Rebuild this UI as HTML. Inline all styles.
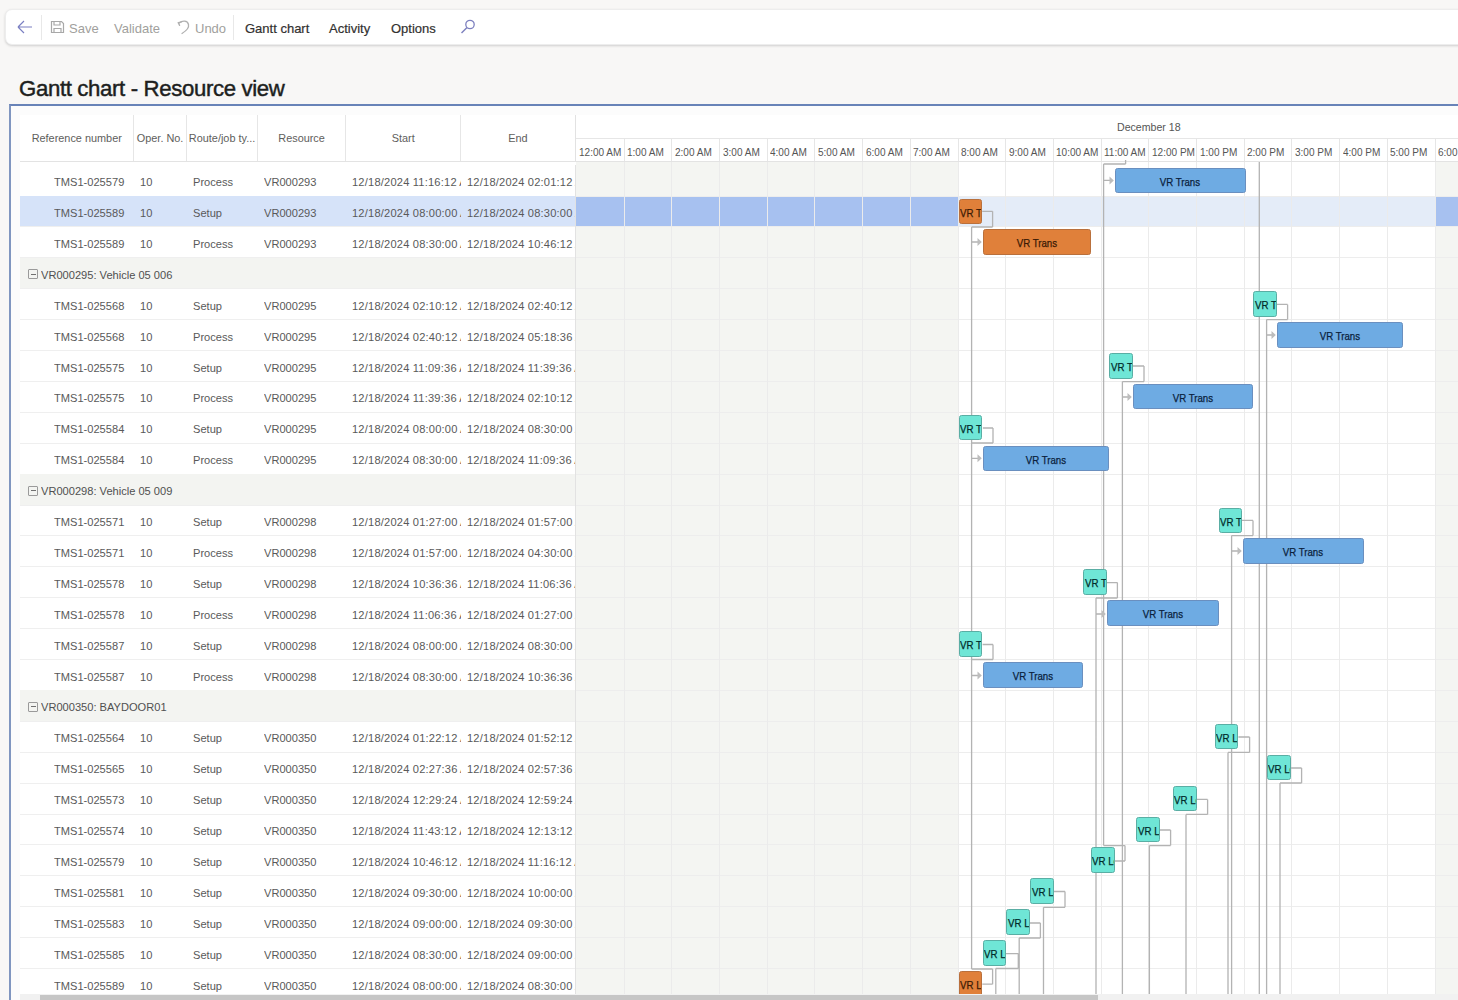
<!DOCTYPE html>
<html><head><meta charset="utf-8"><title>Gantt chart - Resource view</title>
<style>
*{box-sizing:border-box}
html,body{margin:0;padding:0;width:1458px;height:1000px;overflow:hidden;background:#f8f7f6;font-family:"Liberation Sans",sans-serif;}
.abs{position:absolute}
#tb{position:absolute;left:4.8px;top:9px;width:1470px;height:36px;background:#fff;border-radius:7px;border:1px solid #ededed;box-shadow:0 1px 2.5px rgba(0,0,0,.16);}
.ti{position:absolute;top:20.5px;font-size:13px;line-height:16px;white-space:nowrap;color:#323130}
.dis{color:#a19f9d}
.act{-webkit-text-stroke:0.2px #323130}
#title{position:absolute;left:19px;top:75.5px;font-size:22.2px;line-height:26px;color:#201f1e;white-space:nowrap;letter-spacing:-0.35px;-webkit-text-stroke:0.45px #201f1e}
#panel{position:absolute;left:8.8px;top:104px;width:1460px;height:900px;background:#fcfcfc;border-top:2px solid #6883b8;border-left:2px solid #8096c0;}
.hc{position:absolute;top:115px;height:47px;background:#fff;font-size:10.9px;color:#605e5c;line-height:47px;text-align:center;white-space:nowrap;overflow:hidden}
.cell{position:absolute;font-size:11.1px;color:#595959;white-space:nowrap;overflow:hidden;line-height:30px;padding-top:2px}
.bar{position:absolute;height:25.5px;border-radius:2.5px;overflow:hidden;white-space:nowrap;font-size:11px;line-height:22px;padding-top:2px;text-align:center}
.bar span{display:inline-block;transform:scaleX(0.88);transform-origin:0 50%;-webkit-text-stroke:0.25px currentColor}
.bar.c span{transform-origin:50% 50%}
.bp{background:#6eabe3;border:1.3px solid #6a8fbf;color:#0b1f3d}
.bs{background:#6fe6d6;border:1.3px solid #5aaea4;color:#002b2a}
.bo{background:#e0803a;border:1.3px solid #b9703c;color:#3a1a05}
.hl{position:absolute;font-size:10.8px;color:#555;white-space:nowrap;top:145px;line-height:14px;transform:scaleX(0.93);transform-origin:0 50%}
</style></head><body>

<div id="wrap" style="position:absolute;left:0;top:0;width:1458px;height:1000px;background:#f8f7f6">
<div id="tb"></div>
<svg class="abs" style="left:16px;top:19px" width="18" height="16" viewBox="0 0 18 16"><path d="M2 8H16M2 8L8 2M2 8L8 14" stroke="#7a7fc2" stroke-width="1.15" fill="none"/></svg>
<div class="abs" style="left:41px;top:15px;width:1px;height:25px;background:#e8e8e8"></div>
<svg class="abs" style="left:50px;top:20px" width="15" height="14" viewBox="0 0 15 14"><path d="M1.5 1.5H11.5L13.5 3.5V12.5H1.5Z M4 1.5V5H10V1.5 M4 12.5V8.5H11V12.5" stroke="#a8a8a8" stroke-width="1.2" fill="none"/></svg>
<div class="ti dis" style="left:69px">Save</div>
<div class="ti dis" style="left:114px">Validate</div>
<svg class="abs" style="left:177px;top:19px" width="14" height="16" viewBox="0 0 14 16"><path d="M1.8 4.2C5 1.5 10.5 1.2 11.5 5.5C12.2 8.5 9 12 5 14.5" stroke="#b0b0b0" stroke-width="1.3" fill="none" stroke-linecap="round"/><path d="M1.2 3.6L4.2 3.2M1.2 3.6L2.6 6.4" stroke="#b0b0b0" stroke-width="1.3" fill="none" stroke-linecap="round"/></svg>
<div class="ti dis" style="left:195px">Undo</div>
<div class="abs" style="left:233px;top:15px;width:1px;height:25px;background:#e8e8e8"></div>
<div class="ti act" style="left:245px">Gantt chart</div>
<div class="ti act" style="left:329px">Activity</div>
<div class="ti act" style="left:391px">Options</div>
<svg class="abs" style="left:460px;top:19px" width="16" height="15" viewBox="0 0 16 15"><circle cx="10" cy="5.5" r="4.2" stroke="#7d80bf" stroke-width="1.3" fill="none"/><path d="M7 8.5L1.5 14" stroke="#7d80bf" stroke-width="1.4"/></svg>
<div id="title">Gantt chart - Resource view</div>
<div id="panel"></div>
<div class="hc" style="left:20px;width:113.5px">Reference number</div>
<div class="hc" style="left:133.5px;width:53.19999999999999px">Oper. No.</div>
<div class="hc" style="left:186.7px;width:70.69999999999999px">Route/job ty...</div>
<div class="hc" style="left:257.4px;width:88.40000000000003px">Resource</div>
<div class="hc" style="left:345.8px;width:114.80000000000001px">Start</div>
<div class="hc" style="left:460.6px;width:114.69999999999993px">End</div>
<div class="abs" style="left:133.0px;top:115px;width:1px;height:47px;background:#e6e6e6"></div>
<div class="abs" style="left:186.2px;top:115px;width:1px;height:47px;background:#e6e6e6"></div>
<div class="abs" style="left:256.9px;top:115px;width:1px;height:47px;background:#e6e6e6"></div>
<div class="abs" style="left:345.3px;top:115px;width:1px;height:47px;background:#e6e6e6"></div>
<div class="abs" style="left:460.1px;top:115px;width:1px;height:47px;background:#e6e6e6"></div>
<div class="abs" style="left:20px;top:162px;width:556px;height:3px;background:#fff"></div>
<div class="abs" style="left:575.3px;top:115px;width:900px;height:47px;background:#fff"></div>
<div class="abs" style="left:575.3px;top:138px;width:900px;height:1px;background:#e6e6e6"></div>
<div class="abs" style="left:575px;top:115px;width:1px;height:885px;background:#e2e2e2"></div>
<div class="abs" style="left:1117px;top:119.5px;font-size:10.6px;line-height:14px;color:#555;white-space:nowrap">December 18</div>
<div class="hl" style="left:579.4px">12:00 AM</div>
<div class="hl" style="left:627.1px">1:00 AM</div>
<div class="abs" style="left:623.6px;top:138px;width:1px;height:24px;background:#e6e6e6"></div>
<div class="hl" style="left:674.8px">2:00 AM</div>
<div class="abs" style="left:671.3px;top:138px;width:1px;height:24px;background:#e6e6e6"></div>
<div class="hl" style="left:722.5px">3:00 AM</div>
<div class="abs" style="left:719.0px;top:138px;width:1px;height:24px;background:#e6e6e6"></div>
<div class="hl" style="left:770.2px">4:00 AM</div>
<div class="abs" style="left:766.7px;top:138px;width:1px;height:24px;background:#e6e6e6"></div>
<div class="hl" style="left:817.9px">5:00 AM</div>
<div class="abs" style="left:814.4px;top:138px;width:1px;height:24px;background:#e6e6e6"></div>
<div class="hl" style="left:865.6px">6:00 AM</div>
<div class="abs" style="left:862.1px;top:138px;width:1px;height:24px;background:#e6e6e6"></div>
<div class="hl" style="left:913.3px">7:00 AM</div>
<div class="abs" style="left:909.8px;top:138px;width:1px;height:24px;background:#e6e6e6"></div>
<div class="hl" style="left:961.0px">8:00 AM</div>
<div class="abs" style="left:957.5px;top:138px;width:1px;height:24px;background:#e6e6e6"></div>
<div class="hl" style="left:1008.7px">9:00 AM</div>
<div class="abs" style="left:1005.2px;top:138px;width:1px;height:24px;background:#e6e6e6"></div>
<div class="hl" style="left:1056.4px">10:00 AM</div>
<div class="abs" style="left:1052.9px;top:138px;width:1px;height:24px;background:#e6e6e6"></div>
<div class="hl" style="left:1104.1px">11:00 AM</div>
<div class="abs" style="left:1100.6px;top:138px;width:1px;height:24px;background:#e6e6e6"></div>
<div class="hl" style="left:1151.8000000000002px">12:00 PM</div>
<div class="abs" style="left:1148.3000000000002px;top:138px;width:1px;height:24px;background:#e6e6e6"></div>
<div class="hl" style="left:1199.5px">1:00 PM</div>
<div class="abs" style="left:1196.0px;top:138px;width:1px;height:24px;background:#e6e6e6"></div>
<div class="hl" style="left:1247.2px">2:00 PM</div>
<div class="abs" style="left:1243.7px;top:138px;width:1px;height:24px;background:#e6e6e6"></div>
<div class="hl" style="left:1294.9px">3:00 PM</div>
<div class="abs" style="left:1291.4px;top:138px;width:1px;height:24px;background:#e6e6e6"></div>
<div class="hl" style="left:1342.6px">4:00 PM</div>
<div class="abs" style="left:1339.1px;top:138px;width:1px;height:24px;background:#e6e6e6"></div>
<div class="hl" style="left:1390.3000000000002px">5:00 PM</div>
<div class="abs" style="left:1386.8000000000002px;top:138px;width:1px;height:24px;background:#e6e6e6"></div>
<div class="hl" style="left:1438.0px">6:00 PM</div>
<div class="abs" style="left:1434.5px;top:138px;width:1px;height:24px;background:#e6e6e6"></div>
<div class="abs" style="left:20px;top:161px;width:1440px;height:1.2px;background:#e3e3e3"></div>
<div class="abs" style="left:20px;top:162px;width:556px;height:3px;background:#fff"></div>
<div class="abs" style="left:575.5px;top:162px;width:382.5px;height:840px;background:#f4f5f2"></div>
<div class="abs" style="left:958.0px;top:162px;width:477.0px;height:840px;background:#fff"></div>
<div class="abs" style="left:1435.0px;top:162px;width:100px;height:840px;background:#f4f5f2"></div>
<div class="abs" style="left:20px;top:162px;width:555.3px;height:840px;background:#fff"></div>
<div class="cell" style="left:54px;top:165.1px;width:80px">TMS1-025579</div>
<div class="cell" style="left:140px;top:165.1px;width:40px">10</div>
<div class="cell" style="left:193px;top:165.1px;width:60px">Process</div>
<div class="cell" style="left:264px;top:165.1px;width:80px">VR000293</div>
<div class="cell" style="left:352px;top:165.1px;width:108.60000000000002px"><span style="letter-spacing:0.2px">12/18/2024 11:16:12</span> AM</div>
<div class="cell" style="left:467px;top:165.1px;width:108.29999999999995px"><span style="letter-spacing:0.2px">12/18/2024 02:01:12</span> AM</div>
<div class="abs" style="left:20px;top:195.5px;width:555px;height:1px;background:#efefef"></div>
<div class="abs" style="left:20px;top:196.0px;width:555.3px;height:30.9px;background:#d6e3f9"></div>
<div class="abs" style="left:575.5px;top:196.0px;width:382.5px;height:30.9px;background:#a7c1f0"></div>
<div class="abs" style="left:958.0px;top:196.0px;width:477.0px;height:30.9px;background:#e4ecf8"></div>
<div class="abs" style="left:1435.0px;top:196.0px;width:100px;height:30.9px;background:#a7c1f0"></div>
<div class="cell" style="left:54px;top:196.0px;width:80px">TMS1-025589</div>
<div class="cell" style="left:140px;top:196.0px;width:40px">10</div>
<div class="cell" style="left:193px;top:196.0px;width:60px">Setup</div>
<div class="cell" style="left:264px;top:196.0px;width:80px">VR000293</div>
<div class="cell" style="left:352px;top:196.0px;width:108.60000000000002px"><span style="letter-spacing:0.2px">12/18/2024 08:00:00</span> AM</div>
<div class="cell" style="left:467px;top:196.0px;width:108.29999999999995px"><span style="letter-spacing:0.2px">12/18/2024 08:30:00</span> AM</div>
<div class="abs" style="left:20px;top:226.4px;width:555px;height:1px;background:#efefef"></div>
<div class="cell" style="left:54px;top:226.89999999999998px;width:80px">TMS1-025589</div>
<div class="cell" style="left:140px;top:226.89999999999998px;width:40px">10</div>
<div class="cell" style="left:193px;top:226.89999999999998px;width:60px">Process</div>
<div class="cell" style="left:264px;top:226.89999999999998px;width:80px">VR000293</div>
<div class="cell" style="left:352px;top:226.89999999999998px;width:108.60000000000002px"><span style="letter-spacing:0.2px">12/18/2024 08:30:00</span> AM</div>
<div class="cell" style="left:467px;top:226.89999999999998px;width:108.29999999999995px"><span style="letter-spacing:0.2px">12/18/2024 10:46:12</span> AM</div>
<div class="abs" style="left:20px;top:257.29999999999995px;width:555px;height:1px;background:#efefef"></div>
<div class="abs" style="left:20px;top:257.79999999999995px;width:555.3px;height:30.9px;background:#f3f4f1"></div>
<div class="abs" style="left:28px;top:269.29999999999995px;width:10px;height:10px;border:1px solid #9a9a9a;border-radius:1px"></div>
<div class="abs" style="left:30.5px;top:273.79999999999995px;width:5px;height:1px;background:#707070"></div>
<div class="cell" style="left:41px;top:257.79999999999995px;width:300px;color:#505050">VR000295: Vehicle 05 006</div>
<div class="abs" style="left:20px;top:288.19999999999993px;width:555px;height:1px;background:#efefef"></div>
<div class="cell" style="left:54px;top:288.7px;width:80px">TMS1-025568</div>
<div class="cell" style="left:140px;top:288.7px;width:40px">10</div>
<div class="cell" style="left:193px;top:288.7px;width:60px">Setup</div>
<div class="cell" style="left:264px;top:288.7px;width:80px">VR000295</div>
<div class="cell" style="left:352px;top:288.7px;width:108.60000000000002px"><span style="letter-spacing:0.2px">12/18/2024 02:10:12</span> AM</div>
<div class="cell" style="left:467px;top:288.7px;width:108.29999999999995px"><span style="letter-spacing:0.2px">12/18/2024 02:40:12</span> AM</div>
<div class="abs" style="left:20px;top:319.09999999999997px;width:555px;height:1px;background:#efefef"></div>
<div class="cell" style="left:54px;top:319.6px;width:80px">TMS1-025568</div>
<div class="cell" style="left:140px;top:319.6px;width:40px">10</div>
<div class="cell" style="left:193px;top:319.6px;width:60px">Process</div>
<div class="cell" style="left:264px;top:319.6px;width:80px">VR000295</div>
<div class="cell" style="left:352px;top:319.6px;width:108.60000000000002px"><span style="letter-spacing:0.2px">12/18/2024 02:40:12</span> AM</div>
<div class="cell" style="left:467px;top:319.6px;width:108.29999999999995px"><span style="letter-spacing:0.2px">12/18/2024 05:18:36</span> AM</div>
<div class="abs" style="left:20px;top:350.0px;width:555px;height:1px;background:#efefef"></div>
<div class="cell" style="left:54px;top:350.5px;width:80px">TMS1-025575</div>
<div class="cell" style="left:140px;top:350.5px;width:40px">10</div>
<div class="cell" style="left:193px;top:350.5px;width:60px">Setup</div>
<div class="cell" style="left:264px;top:350.5px;width:80px">VR000295</div>
<div class="cell" style="left:352px;top:350.5px;width:108.60000000000002px"><span style="letter-spacing:0.2px">12/18/2024 11:09:36</span> AM</div>
<div class="cell" style="left:467px;top:350.5px;width:108.29999999999995px"><span style="letter-spacing:0.2px">12/18/2024 11:39:36</span> AM</div>
<div class="abs" style="left:20px;top:380.9px;width:555px;height:1px;background:#efefef"></div>
<div class="cell" style="left:54px;top:381.4px;width:80px">TMS1-025575</div>
<div class="cell" style="left:140px;top:381.4px;width:40px">10</div>
<div class="cell" style="left:193px;top:381.4px;width:60px">Process</div>
<div class="cell" style="left:264px;top:381.4px;width:80px">VR000295</div>
<div class="cell" style="left:352px;top:381.4px;width:108.60000000000002px"><span style="letter-spacing:0.2px">12/18/2024 11:39:36</span> AM</div>
<div class="cell" style="left:467px;top:381.4px;width:108.29999999999995px"><span style="letter-spacing:0.2px">12/18/2024 02:10:12</span> AM</div>
<div class="abs" style="left:20px;top:411.79999999999995px;width:555px;height:1px;background:#efefef"></div>
<div class="cell" style="left:54px;top:412.29999999999995px;width:80px">TMS1-025584</div>
<div class="cell" style="left:140px;top:412.29999999999995px;width:40px">10</div>
<div class="cell" style="left:193px;top:412.29999999999995px;width:60px">Setup</div>
<div class="cell" style="left:264px;top:412.29999999999995px;width:80px">VR000295</div>
<div class="cell" style="left:352px;top:412.29999999999995px;width:108.60000000000002px"><span style="letter-spacing:0.2px">12/18/2024 08:00:00</span> AM</div>
<div class="cell" style="left:467px;top:412.29999999999995px;width:108.29999999999995px"><span style="letter-spacing:0.2px">12/18/2024 08:30:00</span> AM</div>
<div class="abs" style="left:20px;top:442.69999999999993px;width:555px;height:1px;background:#efefef"></div>
<div class="cell" style="left:54px;top:443.19999999999993px;width:80px">TMS1-025584</div>
<div class="cell" style="left:140px;top:443.19999999999993px;width:40px">10</div>
<div class="cell" style="left:193px;top:443.19999999999993px;width:60px">Process</div>
<div class="cell" style="left:264px;top:443.19999999999993px;width:80px">VR000295</div>
<div class="cell" style="left:352px;top:443.19999999999993px;width:108.60000000000002px"><span style="letter-spacing:0.2px">12/18/2024 08:30:00</span> AM</div>
<div class="cell" style="left:467px;top:443.19999999999993px;width:108.29999999999995px"><span style="letter-spacing:0.2px">12/18/2024 11:09:36</span> AM</div>
<div class="abs" style="left:20px;top:473.5999999999999px;width:555px;height:1px;background:#efefef"></div>
<div class="abs" style="left:20px;top:474.1px;width:555.3px;height:30.9px;background:#f3f4f1"></div>
<div class="abs" style="left:28px;top:485.6px;width:10px;height:10px;border:1px solid #9a9a9a;border-radius:1px"></div>
<div class="abs" style="left:30.5px;top:490.1px;width:5px;height:1px;background:#707070"></div>
<div class="cell" style="left:41px;top:474.1px;width:300px;color:#505050">VR000298: Vehicle 05 009</div>
<div class="abs" style="left:20px;top:504.5px;width:555px;height:1px;background:#efefef"></div>
<div class="cell" style="left:54px;top:505.0px;width:80px">TMS1-025571</div>
<div class="cell" style="left:140px;top:505.0px;width:40px">10</div>
<div class="cell" style="left:193px;top:505.0px;width:60px">Setup</div>
<div class="cell" style="left:264px;top:505.0px;width:80px">VR000298</div>
<div class="cell" style="left:352px;top:505.0px;width:108.60000000000002px"><span style="letter-spacing:0.2px">12/18/2024 01:27:00</span> AM</div>
<div class="cell" style="left:467px;top:505.0px;width:108.29999999999995px"><span style="letter-spacing:0.2px">12/18/2024 01:57:00</span> AM</div>
<div class="abs" style="left:20px;top:535.4px;width:555px;height:1px;background:#efefef"></div>
<div class="cell" style="left:54px;top:535.9px;width:80px">TMS1-025571</div>
<div class="cell" style="left:140px;top:535.9px;width:40px">10</div>
<div class="cell" style="left:193px;top:535.9px;width:60px">Process</div>
<div class="cell" style="left:264px;top:535.9px;width:80px">VR000298</div>
<div class="cell" style="left:352px;top:535.9px;width:108.60000000000002px"><span style="letter-spacing:0.2px">12/18/2024 01:57:00</span> AM</div>
<div class="cell" style="left:467px;top:535.9px;width:108.29999999999995px"><span style="letter-spacing:0.2px">12/18/2024 04:30:00</span> AM</div>
<div class="abs" style="left:20px;top:566.3px;width:555px;height:1px;background:#efefef"></div>
<div class="cell" style="left:54px;top:566.8px;width:80px">TMS1-025578</div>
<div class="cell" style="left:140px;top:566.8px;width:40px">10</div>
<div class="cell" style="left:193px;top:566.8px;width:60px">Setup</div>
<div class="cell" style="left:264px;top:566.8px;width:80px">VR000298</div>
<div class="cell" style="left:352px;top:566.8px;width:108.60000000000002px"><span style="letter-spacing:0.2px">12/18/2024 10:36:36</span> AM</div>
<div class="cell" style="left:467px;top:566.8px;width:108.29999999999995px"><span style="letter-spacing:0.2px">12/18/2024 11:06:36</span> AM</div>
<div class="abs" style="left:20px;top:597.1999999999999px;width:555px;height:1px;background:#efefef"></div>
<div class="cell" style="left:54px;top:597.6999999999999px;width:80px">TMS1-025578</div>
<div class="cell" style="left:140px;top:597.6999999999999px;width:40px">10</div>
<div class="cell" style="left:193px;top:597.6999999999999px;width:60px">Process</div>
<div class="cell" style="left:264px;top:597.6999999999999px;width:80px">VR000298</div>
<div class="cell" style="left:352px;top:597.6999999999999px;width:108.60000000000002px"><span style="letter-spacing:0.2px">12/18/2024 11:06:36</span> AM</div>
<div class="cell" style="left:467px;top:597.6999999999999px;width:108.29999999999995px"><span style="letter-spacing:0.2px">12/18/2024 01:27:00</span> AM</div>
<div class="abs" style="left:20px;top:628.0999999999999px;width:555px;height:1px;background:#efefef"></div>
<div class="cell" style="left:54px;top:628.6px;width:80px">TMS1-025587</div>
<div class="cell" style="left:140px;top:628.6px;width:40px">10</div>
<div class="cell" style="left:193px;top:628.6px;width:60px">Setup</div>
<div class="cell" style="left:264px;top:628.6px;width:80px">VR000298</div>
<div class="cell" style="left:352px;top:628.6px;width:108.60000000000002px"><span style="letter-spacing:0.2px">12/18/2024 08:00:00</span> AM</div>
<div class="cell" style="left:467px;top:628.6px;width:108.29999999999995px"><span style="letter-spacing:0.2px">12/18/2024 08:30:00</span> AM</div>
<div class="abs" style="left:20px;top:659.0px;width:555px;height:1px;background:#efefef"></div>
<div class="cell" style="left:54px;top:659.5px;width:80px">TMS1-025587</div>
<div class="cell" style="left:140px;top:659.5px;width:40px">10</div>
<div class="cell" style="left:193px;top:659.5px;width:60px">Process</div>
<div class="cell" style="left:264px;top:659.5px;width:80px">VR000298</div>
<div class="cell" style="left:352px;top:659.5px;width:108.60000000000002px"><span style="letter-spacing:0.2px">12/18/2024 08:30:00</span> AM</div>
<div class="cell" style="left:467px;top:659.5px;width:108.29999999999995px"><span style="letter-spacing:0.2px">12/18/2024 10:36:36</span> AM</div>
<div class="abs" style="left:20px;top:689.9px;width:555px;height:1px;background:#efefef"></div>
<div class="abs" style="left:20px;top:690.4px;width:555.3px;height:30.9px;background:#f3f4f1"></div>
<div class="abs" style="left:28px;top:701.9px;width:10px;height:10px;border:1px solid #9a9a9a;border-radius:1px"></div>
<div class="abs" style="left:30.5px;top:706.4px;width:5px;height:1px;background:#707070"></div>
<div class="cell" style="left:41px;top:690.4px;width:300px;color:#505050">VR000350: BAYDOOR01</div>
<div class="abs" style="left:20px;top:720.8px;width:555px;height:1px;background:#efefef"></div>
<div class="cell" style="left:54px;top:721.3px;width:80px">TMS1-025564</div>
<div class="cell" style="left:140px;top:721.3px;width:40px">10</div>
<div class="cell" style="left:193px;top:721.3px;width:60px">Setup</div>
<div class="cell" style="left:264px;top:721.3px;width:80px">VR000350</div>
<div class="cell" style="left:352px;top:721.3px;width:108.60000000000002px"><span style="letter-spacing:0.2px">12/18/2024 01:22:12</span> AM</div>
<div class="cell" style="left:467px;top:721.3px;width:108.29999999999995px"><span style="letter-spacing:0.2px">12/18/2024 01:52:12</span> AM</div>
<div class="abs" style="left:20px;top:751.6999999999999px;width:555px;height:1px;background:#efefef"></div>
<div class="cell" style="left:54px;top:752.2px;width:80px">TMS1-025565</div>
<div class="cell" style="left:140px;top:752.2px;width:40px">10</div>
<div class="cell" style="left:193px;top:752.2px;width:60px">Setup</div>
<div class="cell" style="left:264px;top:752.2px;width:80px">VR000350</div>
<div class="cell" style="left:352px;top:752.2px;width:108.60000000000002px"><span style="letter-spacing:0.2px">12/18/2024 02:27:36</span> AM</div>
<div class="cell" style="left:467px;top:752.2px;width:108.29999999999995px"><span style="letter-spacing:0.2px">12/18/2024 02:57:36</span> AM</div>
<div class="abs" style="left:20px;top:782.6px;width:555px;height:1px;background:#efefef"></div>
<div class="cell" style="left:54px;top:783.1px;width:80px">TMS1-025573</div>
<div class="cell" style="left:140px;top:783.1px;width:40px">10</div>
<div class="cell" style="left:193px;top:783.1px;width:60px">Setup</div>
<div class="cell" style="left:264px;top:783.1px;width:80px">VR000350</div>
<div class="cell" style="left:352px;top:783.1px;width:108.60000000000002px"><span style="letter-spacing:0.2px">12/18/2024 12:29:24</span> AM</div>
<div class="cell" style="left:467px;top:783.1px;width:108.29999999999995px"><span style="letter-spacing:0.2px">12/18/2024 12:59:24</span> AM</div>
<div class="abs" style="left:20px;top:813.5px;width:555px;height:1px;background:#efefef"></div>
<div class="cell" style="left:54px;top:814.0px;width:80px">TMS1-025574</div>
<div class="cell" style="left:140px;top:814.0px;width:40px">10</div>
<div class="cell" style="left:193px;top:814.0px;width:60px">Setup</div>
<div class="cell" style="left:264px;top:814.0px;width:80px">VR000350</div>
<div class="cell" style="left:352px;top:814.0px;width:108.60000000000002px"><span style="letter-spacing:0.2px">12/18/2024 11:43:12</span> AM</div>
<div class="cell" style="left:467px;top:814.0px;width:108.29999999999995px"><span style="letter-spacing:0.2px">12/18/2024 12:13:12</span> AM</div>
<div class="abs" style="left:20px;top:844.4px;width:555px;height:1px;background:#efefef"></div>
<div class="cell" style="left:54px;top:844.9px;width:80px">TMS1-025579</div>
<div class="cell" style="left:140px;top:844.9px;width:40px">10</div>
<div class="cell" style="left:193px;top:844.9px;width:60px">Setup</div>
<div class="cell" style="left:264px;top:844.9px;width:80px">VR000350</div>
<div class="cell" style="left:352px;top:844.9px;width:108.60000000000002px"><span style="letter-spacing:0.2px">12/18/2024 10:46:12</span> AM</div>
<div class="cell" style="left:467px;top:844.9px;width:108.29999999999995px"><span style="letter-spacing:0.2px">12/18/2024 11:16:12</span> AM</div>
<div class="abs" style="left:20px;top:875.3px;width:555px;height:1px;background:#efefef"></div>
<div class="cell" style="left:54px;top:875.8px;width:80px">TMS1-025581</div>
<div class="cell" style="left:140px;top:875.8px;width:40px">10</div>
<div class="cell" style="left:193px;top:875.8px;width:60px">Setup</div>
<div class="cell" style="left:264px;top:875.8px;width:80px">VR000350</div>
<div class="cell" style="left:352px;top:875.8px;width:108.60000000000002px"><span style="letter-spacing:0.2px">12/18/2024 09:30:00</span> AM</div>
<div class="cell" style="left:467px;top:875.8px;width:108.29999999999995px"><span style="letter-spacing:0.2px">12/18/2024 10:00:00</span> AM</div>
<div class="abs" style="left:20px;top:906.1999999999999px;width:555px;height:1px;background:#efefef"></div>
<div class="cell" style="left:54px;top:906.6999999999999px;width:80px">TMS1-025583</div>
<div class="cell" style="left:140px;top:906.6999999999999px;width:40px">10</div>
<div class="cell" style="left:193px;top:906.6999999999999px;width:60px">Setup</div>
<div class="cell" style="left:264px;top:906.6999999999999px;width:80px">VR000350</div>
<div class="cell" style="left:352px;top:906.6999999999999px;width:108.60000000000002px"><span style="letter-spacing:0.2px">12/18/2024 09:00:00</span> AM</div>
<div class="cell" style="left:467px;top:906.6999999999999px;width:108.29999999999995px"><span style="letter-spacing:0.2px">12/18/2024 09:30:00</span> AM</div>
<div class="abs" style="left:20px;top:937.0999999999999px;width:555px;height:1px;background:#efefef"></div>
<div class="cell" style="left:54px;top:937.6px;width:80px">TMS1-025585</div>
<div class="cell" style="left:140px;top:937.6px;width:40px">10</div>
<div class="cell" style="left:193px;top:937.6px;width:60px">Setup</div>
<div class="cell" style="left:264px;top:937.6px;width:80px">VR000350</div>
<div class="cell" style="left:352px;top:937.6px;width:108.60000000000002px"><span style="letter-spacing:0.2px">12/18/2024 08:30:00</span> AM</div>
<div class="cell" style="left:467px;top:937.6px;width:108.29999999999995px"><span style="letter-spacing:0.2px">12/18/2024 09:00:00</span> AM</div>
<div class="abs" style="left:20px;top:968.0px;width:555px;height:1px;background:#efefef"></div>
<div class="cell" style="left:54px;top:968.5px;width:80px">TMS1-025589</div>
<div class="cell" style="left:140px;top:968.5px;width:40px">10</div>
<div class="cell" style="left:193px;top:968.5px;width:60px">Setup</div>
<div class="cell" style="left:264px;top:968.5px;width:80px">VR000350</div>
<div class="cell" style="left:352px;top:968.5px;width:108.60000000000002px"><span style="letter-spacing:0.2px">12/18/2024 08:00:00</span> AM</div>
<div class="cell" style="left:467px;top:968.5px;width:108.29999999999995px"><span style="letter-spacing:0.2px">12/18/2024 08:30:00</span> AM</div>
<div class="abs" style="left:20px;top:998.9px;width:555px;height:1px;background:#efefef"></div>
<div class="abs" style="left:575.5px;top:195.5px;width:900px;height:1px;background:#ededed"></div>
<div class="abs" style="left:575.5px;top:226.4px;width:900px;height:1px;background:#ededed"></div>
<div class="abs" style="left:575.5px;top:257.29999999999995px;width:900px;height:1px;background:#ededed"></div>
<div class="abs" style="left:575.5px;top:288.19999999999993px;width:900px;height:1px;background:#ededed"></div>
<div class="abs" style="left:575.5px;top:319.09999999999997px;width:900px;height:1px;background:#ededed"></div>
<div class="abs" style="left:575.5px;top:350.0px;width:900px;height:1px;background:#ededed"></div>
<div class="abs" style="left:575.5px;top:380.9px;width:900px;height:1px;background:#ededed"></div>
<div class="abs" style="left:575.5px;top:411.79999999999995px;width:900px;height:1px;background:#ededed"></div>
<div class="abs" style="left:575.5px;top:442.69999999999993px;width:900px;height:1px;background:#ededed"></div>
<div class="abs" style="left:575.5px;top:473.5999999999999px;width:900px;height:1px;background:#ededed"></div>
<div class="abs" style="left:575.5px;top:504.5px;width:900px;height:1px;background:#ededed"></div>
<div class="abs" style="left:575.5px;top:535.4px;width:900px;height:1px;background:#ededed"></div>
<div class="abs" style="left:575.5px;top:566.3px;width:900px;height:1px;background:#ededed"></div>
<div class="abs" style="left:575.5px;top:597.1999999999999px;width:900px;height:1px;background:#ededed"></div>
<div class="abs" style="left:575.5px;top:628.0999999999999px;width:900px;height:1px;background:#ededed"></div>
<div class="abs" style="left:575.5px;top:659.0px;width:900px;height:1px;background:#ededed"></div>
<div class="abs" style="left:575.5px;top:689.9px;width:900px;height:1px;background:#ededed"></div>
<div class="abs" style="left:575.5px;top:720.8px;width:900px;height:1px;background:#ededed"></div>
<div class="abs" style="left:575.5px;top:751.6999999999999px;width:900px;height:1px;background:#ededed"></div>
<div class="abs" style="left:575.5px;top:782.6px;width:900px;height:1px;background:#ededed"></div>
<div class="abs" style="left:575.5px;top:813.5px;width:900px;height:1px;background:#ededed"></div>
<div class="abs" style="left:575.5px;top:844.4px;width:900px;height:1px;background:#ededed"></div>
<div class="abs" style="left:575.5px;top:875.3px;width:900px;height:1px;background:#ededed"></div>
<div class="abs" style="left:575.5px;top:906.1999999999999px;width:900px;height:1px;background:#ededed"></div>
<div class="abs" style="left:575.5px;top:937.0999999999999px;width:900px;height:1px;background:#ededed"></div>
<div class="abs" style="left:575.5px;top:968.0px;width:900px;height:1px;background:#ededed"></div>
<div class="abs" style="left:575.5px;top:998.9px;width:900px;height:1px;background:#ededed"></div>
<div class="abs" style="left:623.6px;top:162px;width:1px;height:840px;background:#ebebeb"></div>
<div class="abs" style="left:671.3px;top:162px;width:1px;height:840px;background:#ebebeb"></div>
<div class="abs" style="left:719.0px;top:162px;width:1px;height:840px;background:#ebebeb"></div>
<div class="abs" style="left:766.7px;top:162px;width:1px;height:840px;background:#ebebeb"></div>
<div class="abs" style="left:814.4px;top:162px;width:1px;height:840px;background:#ebebeb"></div>
<div class="abs" style="left:862.1px;top:162px;width:1px;height:840px;background:#ebebeb"></div>
<div class="abs" style="left:909.8px;top:162px;width:1px;height:840px;background:#ebebeb"></div>
<div class="abs" style="left:957.5px;top:162px;width:1px;height:840px;background:#ebebeb"></div>
<div class="abs" style="left:1005.2px;top:162px;width:1px;height:840px;background:#ebebeb"></div>
<div class="abs" style="left:1052.9px;top:162px;width:1px;height:840px;background:#ebebeb"></div>
<div class="abs" style="left:1100.6px;top:162px;width:1px;height:840px;background:#ebebeb"></div>
<div class="abs" style="left:1148.3000000000002px;top:162px;width:1px;height:840px;background:#ebebeb"></div>
<div class="abs" style="left:1196.0px;top:162px;width:1px;height:840px;background:#ebebeb"></div>
<div class="abs" style="left:1243.7px;top:162px;width:1px;height:840px;background:#ebebeb"></div>
<div class="abs" style="left:1291.4px;top:162px;width:1px;height:840px;background:#ebebeb"></div>
<div class="abs" style="left:1339.1px;top:162px;width:1px;height:840px;background:#ebebeb"></div>
<div class="abs" style="left:1386.8000000000002px;top:162px;width:1px;height:840px;background:#ebebeb"></div>
<div class="abs" style="left:1434.5px;top:162px;width:1px;height:840px;background:#ebebeb"></div>
<div class="abs" style="left:576.4px;top:162px;width:900px;height:3px;background:rgba(0,0,0,0)"></div>
<svg class="abs" style="left:0;top:0" width="1458" height="1000" viewBox="0 0 1458 1000"><path d="M971.6 227.0L971.6 969.0 M1096.0 598.0L1096.0 1000.0 M1103.6 164.0L1103.6 845.6 M1122.4 381.6L1122.4 1000.0 M1149.4 845.6L1149.4 1000.0 M1186.0 814.4L1186.0 1000.0 M1228.0 752.4L1228.0 1000.0 M1231.6 535.6L1231.6 1000.0 M1259.3 162.0L1259.3 1000.0 M1266.6 319.6L1266.6 1000.0 M1280.0 783.0L1280.0 1000.0 M995.8 968.5L995.8 1000.0 M1019.2 938.0L1019.2 1000.0 M1043.5 907.3L1043.5 1000.0 M982.2 211.3L992.6 211.3 M992.6 211.3L992.6 227.0 M992.6 227.0L971.6 227.0 M1276.0 304.4L1287.6 304.4 M1287.6 304.4L1287.6 319.6 M1287.6 319.6L1266.6 319.6 M1132.4 366.0L1144.0 366.0 M1144.0 366.0L1144.0 381.6 M1144.0 381.6L1122.4 381.6 M982.9 428.0L993.0 428.0 M993.0 428.0L993.0 443.0 M993.0 443.0L971.6 443.0 M1241.6 520.4L1253.0 520.4 M1253.0 520.4L1253.0 535.6 M1253.0 535.6L1231.6 535.6 M1106.0 582.6L1117.4 582.6 M1117.4 582.6L1117.4 598.0 M1117.4 598.0L1096.0 598.0 M982.6 644.5L993.0 644.5 M993.0 644.5L993.0 659.5 M993.0 659.5L971.6 659.5 M1238.4 737.0L1249.6 737.0 M1249.6 737.0L1249.6 752.4 M1249.6 752.4L1228.0 752.4 M1290.0 768.0L1301.6 768.0 M1301.6 768.0L1301.6 783.0 M1301.6 783.0L1280.0 783.0 M1196.0 799.4L1207.6 799.4 M1207.6 799.4L1207.6 814.4 M1207.6 814.4L1186.0 814.4 M1159.4 830.0L1170.6 830.0 M1170.6 830.0L1170.6 845.6 M1170.6 845.6L1149.4 845.6 M1114.6 861.0L1125.0 861.0 M1125.0 861.0L1125.0 845.6 M1125.0 845.6L1103.6 845.6 M1053.4 891.5L1065.0 891.5 M1065.0 891.5L1065.0 907.3 M1065.0 907.3L1043.5 907.3 M1029.5 923.0L1040.4 923.0 M1040.4 923.0L1040.4 938.0 M1040.4 938.0L1019.2 938.0 M1005.7 953.6L1018.3 953.6 M1018.3 953.6L1018.3 968.5 M1018.3 968.5L995.8 968.5 M982.3 984.2L992.6 984.2 M992.6 984.2L992.6 969.0 M992.6 969.0L971.6 969.0 M1103.6 164.0L1125.6 164.0 M1125.6 160.0L1125.6 164.0 M1103.6 180.4L1110.0 180.4 M971.6 242.0L978.0 242.0 M1266.6 335.0L1272.0 335.0 M1122.4 397.0L1128.0 397.0 M971.6 458.3L978.0 458.3 M1231.6 551.0L1238.0 551.0 M1096.0 614.0L1102.0 614.0 M971.6 675.5L978.0 675.5" stroke="#b3b3b3" stroke-width="1.3" fill="none"/><path d="M1109.5 176.4L1113.8 180.4L1109.5 184.4Z M977.5 238.0L981.8 242.0L977.5 246.0Z M1271.5 331.0L1275.8 335.0L1271.5 339.0Z M1127.5 393.0L1131.8 397.0L1127.5 401.0Z M977.5 454.3L981.8 458.3L977.5 462.3Z M1237.5 547.0L1241.8 551.0L1237.5 555.0Z M1101.5 610.0L1105.8 614.0L1101.5 618.0Z M977.5 671.5L981.8 675.5L977.5 679.5Z" fill="#bdbdbd"/></svg>
<div class="bar bp c" style="left:1114.7px;top:167.6px;width:131.1px;text-align:center;"><span>VR Trans</span></div>
<div class="bar bo" style="left:958.7px;top:198.5px;width:23.8px;text-align:left;padding-left:0.5px;"><span>VR Trans</span></div>
<div class="bar bo c" style="left:982.6px;top:229.4px;width:108.2px;text-align:center;"><span>VR Trans</span></div>
<div class="bar bs" style="left:1253.0px;top:291.2px;width:23.8px;text-align:left;padding-left:0.5px;"><span>VR Trans</span></div>
<div class="bar bp c" style="left:1276.9px;top:322.1px;width:125.8px;text-align:center;"><span>VR Trans</span></div>
<div class="bar bs" style="left:1109.4px;top:353.0px;width:23.7px;text-align:left;padding-left:0.5px;"><span>VR Trans</span></div>
<div class="bar bp c" style="left:1133.3px;top:383.9px;width:119.6px;text-align:center;"><span>VR Trans</span></div>
<div class="bar bs" style="left:958.7px;top:414.8px;width:23.8px;text-align:left;padding-left:0.5px;"><span>VR Trans</span></div>
<div class="bar bp c" style="left:982.6px;top:445.7px;width:126.8px;text-align:center;"><span>VR Trans</span></div>
<div class="bar bs" style="left:1218.7px;top:507.5px;width:23.7px;text-align:left;padding-left:0.5px;"><span>VR Trans</span></div>
<div class="bar bp c" style="left:1242.5px;top:538.4px;width:121.5px;text-align:center;"><span>VR Trans</span></div>
<div class="bar bs" style="left:1083.2px;top:569.3px;width:23.8px;text-align:left;padding-left:0.5px;"><span>VR Trans</span></div>
<div class="bar bp c" style="left:1107.0px;top:600.2px;width:111.5px;text-align:center;"><span>VR Trans</span></div>
<div class="bar bs" style="left:958.7px;top:631.1px;width:23.8px;text-align:left;padding-left:0.5px;"><span>VR Trans</span></div>
<div class="bar bp c" style="left:982.6px;top:662.0px;width:100.5px;text-align:center;"><span>VR Trans</span></div>
<div class="bar bs" style="left:1214.8px;top:723.8px;width:23.7px;text-align:left;padding-left:0.5px;"><span>VR Loading</span></div>
<div class="bar bs" style="left:1266.8px;top:754.7px;width:23.8px;text-align:left;padding-left:0.5px;"><span>VR Loading</span></div>
<div class="bar bs" style="left:1172.9px;top:785.6px;width:23.8px;text-align:left;padding-left:0.5px;"><span>VR Loading</span></div>
<div class="bar bs" style="left:1136.1px;top:816.5px;width:23.8px;text-align:left;padding-left:0.5px;"><span>VR Loading</span></div>
<div class="bar bs" style="left:1090.8px;top:847.4px;width:23.8px;text-align:left;padding-left:0.5px;"><span>VR Loading</span></div>
<div class="bar bs" style="left:1030.2px;top:878.3px;width:23.8px;text-align:left;padding-left:0.5px;"><span>VR Loading</span></div>
<div class="bar bs" style="left:1006.4px;top:909.2px;width:23.7px;text-align:left;padding-left:0.5px;"><span>VR Loading</span></div>
<div class="bar bs" style="left:982.6px;top:940.1px;width:23.8px;text-align:left;padding-left:0.5px;"><span>VR Loading</span></div>
<div class="bar bo" style="left:958.7px;top:971.0px;width:23.8px;text-align:left;padding-left:0.5px;"><span>VR Loading</span></div>
<div class="abs" style="left:20px;top:993.5px;width:1440px;height:8px;background:#f1f1f1"></div>
<div class="abs" style="left:40px;top:994.5px;width:1058px;height:6px;background:#c6c6c6"></div>
</div>
</body></html>
